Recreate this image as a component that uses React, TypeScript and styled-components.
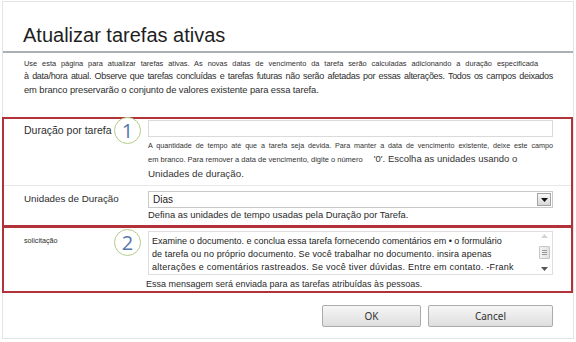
import styled, { createGlobalStyle } from "styled-components";

const GlobalStyle = createGlobalStyle`
  html, body {
    margin: 0;
    padding: 0;
    background: #ffffff;
  }
  body {
    font-family: "Liberation Sans", Arial, sans-serif;
    color: #2a2a2a;
  }
`;

const Frame = styled.div`
  box-sizing: border-box;
  width: 572px;
  height: 338px;
  margin: 1px 0 0 2px;
  border: 1px solid #e4e4e4;
  display: flex;
  flex-direction: column;
`;

const Header = styled.div`
  padding: 22px 0 4px 20px;
  border-bottom: 2px solid #a9b0b6;
`;

const Title = styled.h1`
  margin: 0;
  font-size: 20px;
  font-weight: normal;
  line-height: 23px;
  color: #1f1f1f;
`;

const Intro = styled.div`
  padding: 4px 0 0 21px;
  color: #2e2e2e;
`;

type LineProps = { $size: number; $width?: number; $spacing?: number };

const TextLine = styled.div<LineProps>`
  font-size: ${(p) => p.$size}px;
  line-height: 13px;
  white-space: nowrap;
  width: ${(p) => (p.$width ? `${p.$width}px` : "auto")};
  text-align-last: ${(p) => (p.$width ? "justify" : "auto")};
  letter-spacing: ${(p) => p.$spacing ?? 0}px;
`;

const Section = styled.div<{ $top: number }>`
  margin: ${(p) => p.$top}px 0 0 -1px;
  width: 571px;
  box-sizing: border-box;
  border: 2px solid #b2323a;
`;

const Row = styled.div<{ $padTop: number; $padBottom: number; $divider?: boolean }>`
  display: grid;
  grid-template-columns: 144px 405px;
  padding: ${(p) => p.$padTop}px 0 ${(p) => p.$padBottom}px 0;
  border-bottom: ${(p) => (p.$divider ? "1px solid #e8e8e8" : "none")};
`;

const Label = styled.div<{ $size: number; $padTop: number }>`
  position: relative;
  padding: ${(p) => p.$padTop}px 0 0 20px;
  font-size: ${(p) => p.$size}px;
  line-height: 13px;
  color: #2e2e2e;
  white-space: nowrap;
`;

const Badge = styled.span<{ $top: number }>`
  position: absolute;
  left: 110px;
  top: ${(p) => p.$top}px;
  width: 25px;
  height: 25px;
  border: 1.5px solid #b3cd86;
  border-radius: 50%;
  display: flex;
  align-items: center;
  justify-content: center;
  font-family: "Open Sans", "Liberation Sans", sans-serif;
  font-size: 20px;
  line-height: 1;
  color: #5478ad;
  background: #fff;
`;

const Field = styled.div`
  display: flex;
  flex-direction: column;
`;

const Input = styled.div`
  box-sizing: border-box;
  height: 17px;
  border: 1px solid #dadada;
  background: #fff;
`;

const Help = styled.div`
  margin-top: 3px;
  color: #333;
`;

const HelpLine = styled.div<{ $height: number }>`
  display: flex;
  align-items: baseline;
  white-space: nowrap;
  line-height: ${(p) => p.$height}px;
`;

const Span = styled.span<{ $size: number; $width?: number; $gap?: number }>`
  display: inline-block;
  font-size: ${(p) => p.$size}px;
  width: ${(p) => (p.$width ? `${p.$width}px` : "auto")};
  text-align-last: ${(p) => (p.$width ? "justify" : "auto")};
  margin-left: ${(p) => p.$gap ?? 0}px;
`;

const Select = styled.div`
  box-sizing: border-box;
  height: 17px;
  border: 1px solid #c9c9c9;
  display: flex;
  align-items: center;
  justify-content: space-between;
  padding: 0 1px 0 4px;
  font-size: 10px;
  color: #222;
`;

const DropButton = styled.span`
  box-sizing: border-box;
  width: 14px;
  height: 13px;
  border: 1px solid #a3a3a3;
  background: linear-gradient(#f7f7f7, #d8d8d8);
  display: flex;
  align-items: center;
  justify-content: center;
`;

const TextArea = styled.div`
  box-sizing: border-box;
  height: 44px;
  border: 1px solid #dedede;
  display: flex;
  color: #222;
`;

const AreaText = styled.div`
  flex: 1;
  padding: 3px 0 0 3px;
  overflow: hidden;
`;

const AreaLine = styled.div<{ $spacing?: number }>`
  font-size: 9px;
  line-height: 13px;
  white-space: nowrap;
  letter-spacing: ${(p) => p.$spacing ?? 0}px;
`;

const Scrollbar = styled.div`
  width: 15px;
  display: flex;
  flex-direction: column;
  align-items: center;
  justify-content: space-between;
  padding: 2px 0 3px;
`;

const Thumb = styled.span`
  box-sizing: border-box;
  width: 11px;
  height: 13px;
  border: 1px solid #c6c6c6;
  border-radius: 1px;
  background: linear-gradient(90deg, #f2f2f2, #e2e2e2);
  display: flex;
  flex-direction: column;
  align-items: center;
  justify-content: center;
  gap: 1px;
`;

const Grip = styled.span`
  width: 5px;
  height: 1px;
  background: #9a9a9a;
`;

const Note = styled.div`
  margin: 3px 0 0 -2px;
  font-size: 9px;
  line-height: 13px;
  color: #2a2a2a;
  white-space: nowrap;
`;

const Footer = styled.div`
  display: flex;
  justify-content: flex-end;
  gap: 7px;
  padding: 12px 20px 0 0;
`;

const Button = styled.button<{ $width: number }>`
  box-sizing: border-box;
  width: ${(p) => p.$width}px;
  height: 22px;
  border: 1px solid #ababab;
  border-radius: 2px;
  background: linear-gradient(#f6f6f6, #dedede);
  font-family: "Noto Sans", "Liberation Sans", sans-serif;
  font-size: 10px;
  color: #333;
  padding: 0;
`;

function Arrow({ up, color }: { up?: boolean; color: string }) {
  return (
    <svg width="7" height="4" viewBox="0 0 7 4">
      <path d={up ? "M0 4 L3.5 0 L7 4 Z" : "M0 0 L7 0 L3.5 4 Z"} fill={color} />
    </svg>
  );
}

export default function App() {
  return (
    <>
      <GlobalStyle />
      <Frame>
        <Header>
          <Title>Atualizar tarefas ativas</Title>
        </Header>
        <Intro>
          <TextLine $size={7.4} $width={514}>
            Use esta página para atualizar tarefas ativas. As novas datas de vencimento da tarefa serão calculadas adicionando a duração especificada
          </TextLine>
          <TextLine $size={9} $width={529} $spacing={-0.3}>
            à data/hora atual. Observe que tarefas concluídas e tarefas futuras não serão afetadas por essas alterações. Todos os campos deixados
          </TextLine>
          <TextLine $size={9.4} $spacing={-0.1}>
            em branco preservarão o conjunto de valores existente para essa tarefa.
          </TextLine>
        </Intro>

        <Section $top={21}>
          <Row $padTop={1} $padBottom={4} $divider>
            <Label $size={10.5} $padTop={4}>
              Duração por tarefa
              <Badge $top={-3}>1</Badge>
            </Label>
            <Field>
              <Input />
              <Help>
                <HelpLine $height={12}>
                  <Span $size={7.2} $width={405}>
                    A quantidade de tempo até que a tarefa seja devida. Para manter a data de vencimento existente, deixe este campo
                  </Span>
                </HelpLine>
                <HelpLine $height={14}>
                  <Span $size={7.5}>em branco. Para remover a data de vencimento, digite o número</Span>
                  <Span $size={9.5} $gap={11}>'0'. Escolha as unidades usando o</Span>
                </HelpLine>
                <HelpLine $height={14}>
                  <Span $size={9.8}>Unidades de duração.</Span>
                </HelpLine>
              </Help>
            </Field>
          </Row>
          <Row $padTop={5} $padBottom={3}>
            <Label $size={9.8} $padTop={1}>
              Unidades de Duração
            </Label>
            <Field>
              <Select>
                Dias
                <DropButton>
                  <Arrow color="#111" />
                </DropButton>
              </Select>
              <HelpLine $height={14}>
                <Span $size={9.4}>Defina as unidades de tempo usadas pela Duração por Tarefa.</Span>
              </HelpLine>
            </Field>
          </Row>
        </Section>

        <Section $top={-1}>
          <Row $padTop={3} $padBottom={0}>
            <Label $size={7.2} $padTop={3}>
              solicitação
              <Badge $top={-2}>2</Badge>
            </Label>
            <Field>
              <TextArea>
                <AreaText>
                  <AreaLine>Examine o documento. e conclua essa tarefa fornecendo comentários em • o formulário</AreaLine>
                  <AreaLine $spacing={0.1}>de tarefa ou no próprio documento. Se você trabalhar no documento. insira apenas</AreaLine>
                  <AreaLine $spacing={0.25}>alterações e comentários rastreados. Se você tiver dúvidas. Entre em contato. -Frank</AreaLine>
                </AreaText>
                <Scrollbar>
                  <Arrow up color="#d4d4d4" />
                  <Thumb>
                    <Grip />
                    <Grip />
                    <Grip />
                  </Thumb>
                  <Arrow color="#555" />
                </Scrollbar>
              </TextArea>
              <Note>Essa mensagem será enviada para as tarefas atribuídas às pessoas.</Note>
            </Field>
          </Row>
        </Section>

        <Footer>
          <Button $width={99}>OK</Button>
          <Button $width={125}>Cancel</Button>
        </Footer>
      </Frame>
    </>
  );
}
